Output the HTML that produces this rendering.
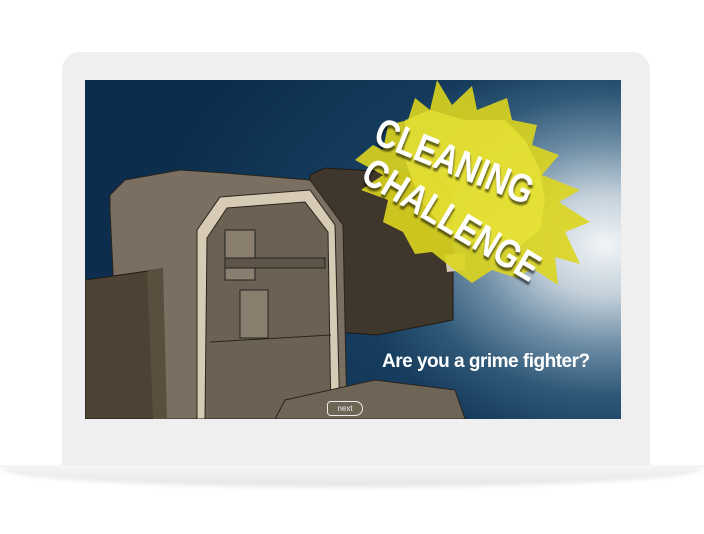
<!DOCTYPE html>
<html><head><style>
body{margin:0;width:704px;height:534px;background:#fff;position:relative;overflow:hidden;font-family:"Liberation Sans",sans-serif}
.body{position:absolute;left:62px;top:52px;width:588px;height:420px;background:#efefef;border-radius:18px 18px 0 0}
.base{position:absolute;left:0;top:465px;width:704px;height:20px;background:linear-gradient(#f6f6f6,#e6e6e6);border-radius:0 0 50% 50%/0 0 100% 100%;box-shadow:0 3px 4px rgba(0,0,0,.08)}
.scr{position:absolute;left:85px;top:80px;width:536px;height:339px;overflow:hidden;background:radial-gradient(ellipse 260px 200px at 520px 165px,#f2f5f7 0%,#c4d1db 25%,#6f8ea6 50%,#2f5878 75%,#163c5e 100%);}
.scr:before{content:"";position:absolute;inset:0;background:radial-gradient(ellipse 400px 300px at 470px 175px,transparent 55%,#0c2e4c 100%)}
.q{position:absolute;left:297px;top:271px;color:#fff;font-size:19px;font-weight:bold;letter-spacing:-.5px}
.next{position:absolute;left:242px;top:321px;width:34px;height:13px;border:1.5px solid #eee;border-radius:4px 8px 8px 4px;color:#eee;font-size:8px;text-align:center;line-height:13px}
.t{position:absolute;color:#fff;font-weight:bold;font-family:"Liberation Sans",sans-serif;text-shadow:2px 3px 2px rgba(0,0,0,.55);white-space:nowrap}
</style></head><body>
<div class="body"></div>
<div class="base"></div>
<div class="scr">
<svg width="536" height="339" style="position:absolute;left:0;top:0">
<polygon points="225,95 240,88 350,95 368,110 368,240 292,255 225,250" fill="#3f362c" stroke="#1e1a15"/>
<polygon points="360,175 380,172 380,190 362,192" fill="#d8cbb5"/>
<polygon points="25,115 40,100 95,90 140,93 225,100 258,145 262,339 35,339 25,130" fill="#7a6f60" stroke="#2a241d"/>
<polygon points="112,150 135,117 225,110 250,145 255,339 112,339" fill="#d8cbb5" stroke="#2a241d"/>
<polygon points="122,158 142,128 220,122 243,152 246,339 120,339" fill="#6c6253" stroke="#2a241d"/>
<rect x="140" y="150" width="30" height="50" fill="#8a7f6e" stroke="#222"/>
<rect x="155" y="210" width="28" height="48" fill="#8a7f6e" stroke="#222"/>
<rect x="140" y="178" width="100" height="10" fill="#5e5548" stroke="#222"/>
<line x1="125" y1="262" x2="246" y2="255" stroke="#2a241d"/>
<polygon points="0,200 70,190 78,339 0,339" fill="#4d4233" stroke="#1e1a15"/>
<polygon points="62,190 78,188 82,339 68,339" fill="#5a4e3e"/>
<polygon points="200,320 290,300 370,310 380,339 190,339" fill="#6f6556" stroke="#2a241d"/>
<polygon points="270,80 288,65 298,70 303,45 323,40 330,18 345,30 352,0 367,25 387,6 392,30 422,18 427,40 452,45 447,65 474,75 457,95 495,110 474,122 505,142 480,152 495,184 470,177 473,205 447,188 432,198 407,190 387,203 372,192 347,172 330,174 318,152 298,142 303,120 276,110 298,95" fill="#dcd51e" opacity=".9"/>
<polygon points="320,40 345,30 380,40 420,40 440,60 455,90 460,120 455,150 430,170 395,165 360,150 335,120 320,80" fill="#efe93a" opacity=".6"/>
</svg>
<div class="t" style="left:300px;top:30px;font-size:40px;transform:rotate(22deg) scaleX(.8);transform-origin:left top">CLEANING</div>
<div class="t" style="left:292px;top:70px;font-size:40px;transform:rotate(31deg) scaleX(.8);transform-origin:left top">CHALLENGE</div>
<div class="q">Are you a grime fighter?</div>
<div class="next">next</div>
</div>
</body></html>
